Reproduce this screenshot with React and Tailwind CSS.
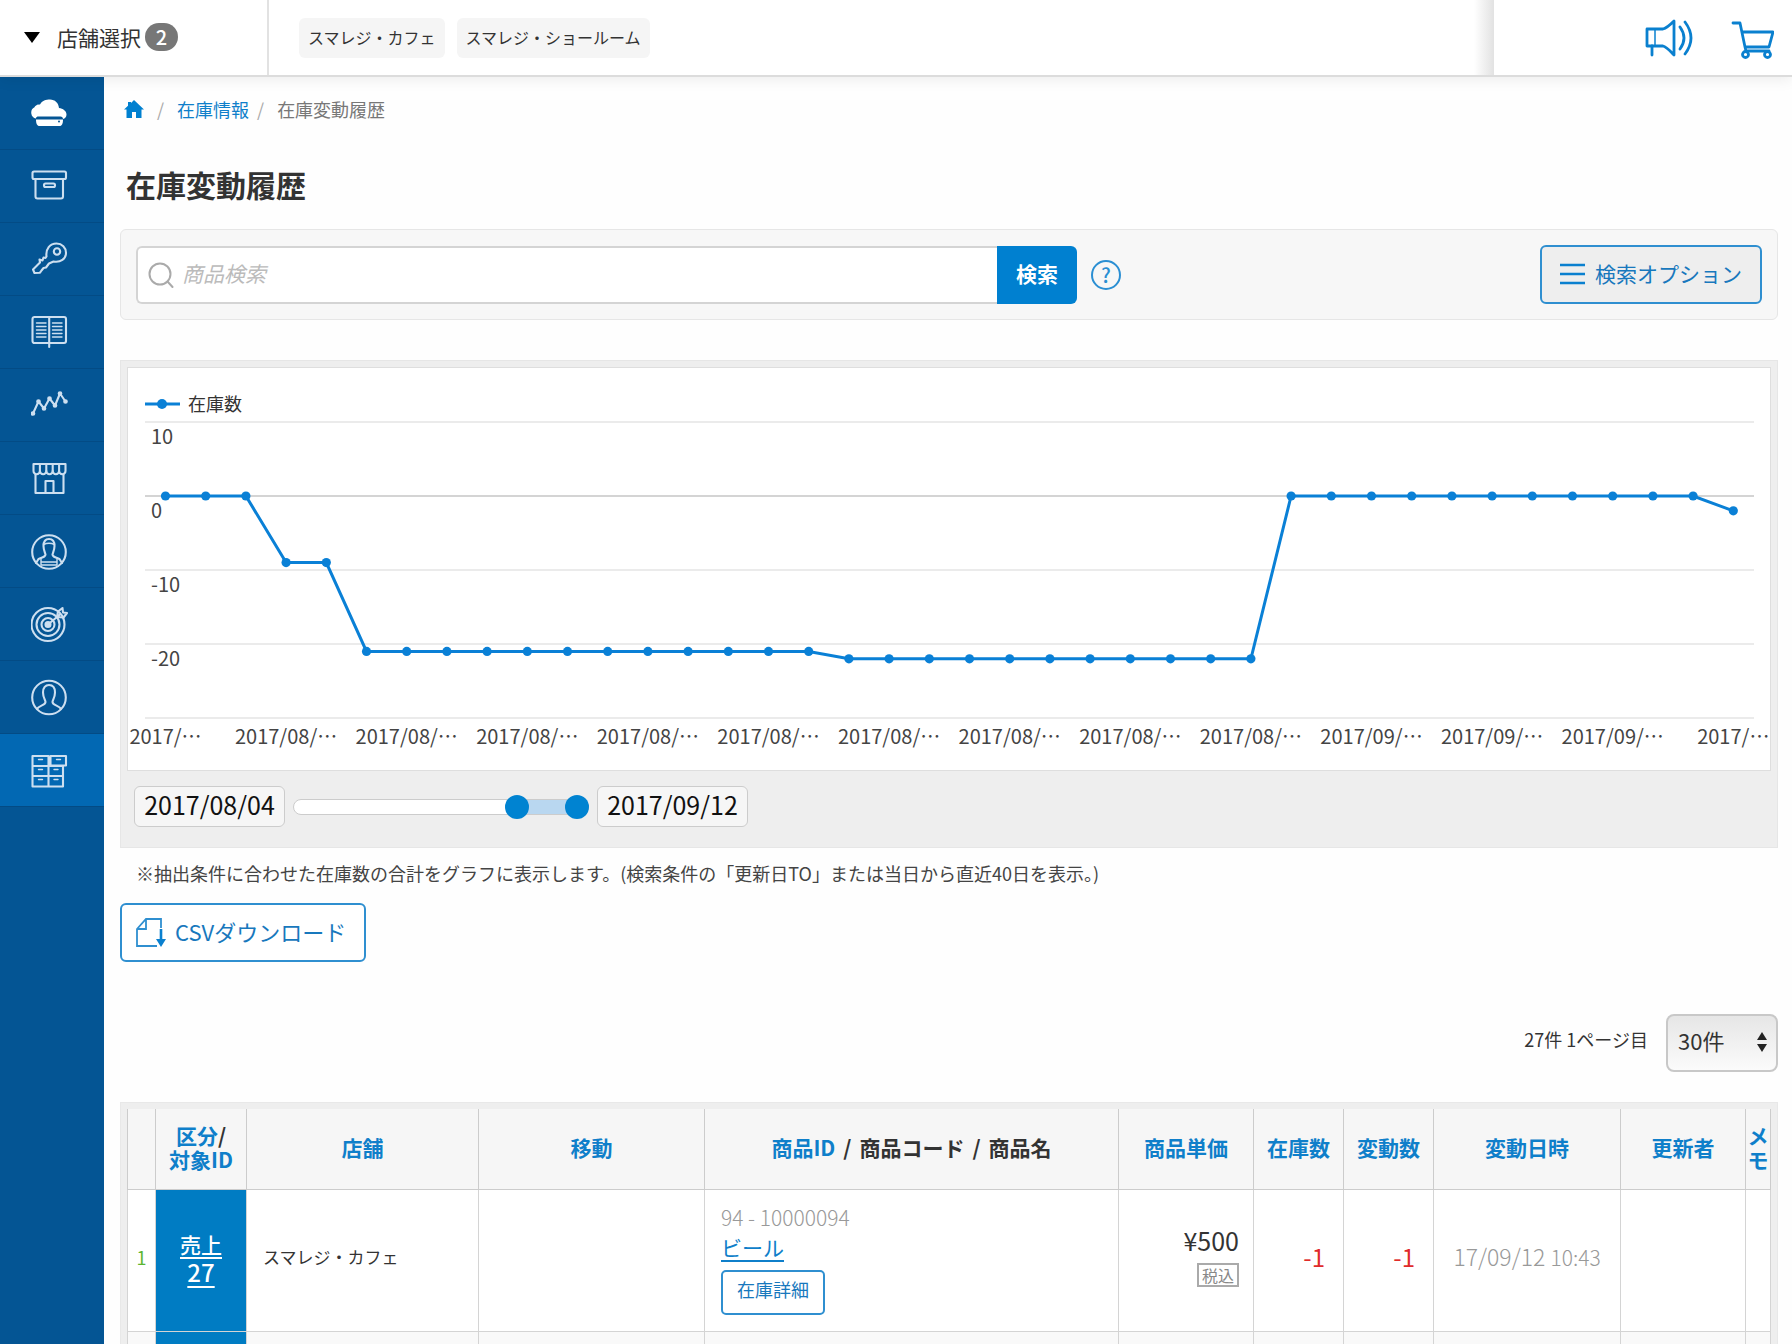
import { useState } from 'react';
import clsx from 'clsx';

const icons = {
  cloud: (
    <>
      <path
        d="M5 23.5a6 6 0 0 1-1.5-11.2C5 9.5 7.5 9.5 9 9.5 11 5.5 15 4.5 19 4.5c5 0 8.5 3.5 9 8.5 4 .5 7.5 3 7.5 6.5 0 2.5-1.5 4-3.5 4.5 0-1.5-1-2.5-2.5-2.5h-22C6 21.5 5 22 5 23.5z"
        fill="#fff"
        stroke="none"
      />
      <path d="M5 24.5h27c0 4-1 6.5-3.5 6.5h-20C6 31 5 28.5 5 24.5z" fill="#fff" stroke="none" />
      <circle cx="28" cy="26.5" r="1" fill="#045594" stroke="none" />
    </>
  ),
  archive: (
    <>
      <rect x="1.5" y="3.5" width="33.5" height="7.5" rx="1.5" />
      <path d="M4.5 11v17.5a2 2 0 0 0 2 2H30a2 2 0 0 0 2-2V11" />
      <rect x="13" y="15.5" width="11" height="3.5" rx="1.5" />
    </>
  ),
  key: (
    <>
      <path d="M15.5 15.5C14.5 8 19 2.5 25.5 2.5c5.5 0 9.5 4 9.5 9.3 0 6.2-5.5 10-12.5 8.7l-4.5 2-3 4-2.5.5-2 2.5L9 31.7l-5.5.3L2 28.5l7-7-.5-3 3 1 1-3 2 .5z" />
      <circle cx="26" cy="10.5" r="3.2" />
    </>
  ),
  book: (
    <>
      <rect x="1.5" y="3" width="33.5" height="26" rx="2" />
      <path d="M18.2 3v30" />
      <path d="M5.5 9H15M5.5 12.5H15M5.5 16H15M5.5 19.5H15M5.5 23H15M21.5 9H31M21.5 12.5H31M21.5 16H31M21.5 19.5H31M21.5 23H31" strokeWidth="1.4" />
    </>
  ),
  trend: (
    <>
      <path d="M2 26.5 7.5 14.5 13 21.5 18.5 11.5 24 18.5 29 6.5 34.5 14.5" />
      {[[2, 26.5], [7.5, 14.5], [13, 21.5], [18.5, 11.5], [24, 18.5], [29, 6.5], [34.5, 14.5]].map(([x, y]) => (
        <circle key={x} cx={x} cy={y} r="1.3" fill="currentColor" />
      ))}
    </>
  ),
  shop: (
    <>
      <path d="M2.5 4h32v7a3.2 3.2 0 0 1-6.4 0 3.2 3.2 0 0 1-6.4 0 3.2 3.2 0 0 1-6.4 0 3.2 3.2 0 0 1-6.4 0 3.2 3.2 0 0 1-6.4 0z" />
      <path d="M8.9 4v7M15.3 4v7M21.7 4v7M28.1 4v7" />
      <path d="M4.5 14.5V33h28V14.5M14.5 33V21h8v12" />
    </>
  ),
  staff: (
    <>
      <circle cx="18" cy="19" r="16.8" />
      <path d="M12.5 13c0-4.5 2-7 5.5-7s5.5 2.5 5.5 7c0 4-1.5 6.5-2 8.5 0 2 2 2.5 7 4.5l2.5 4M12.5 13c0 4 1.5 6.5 2 8.5 0 2-2 2.5-7 4.5L5 30" />
      <path d="M12.5 11.5c3.5-1.5 7.5-1.5 11 0M10 26v6h16v-6M10 29h16" strokeWidth="1.4" />
    </>
  ),
  target: (
    <>
      <circle cx="17" cy="18.5" r="16.5" />
      <circle cx="17" cy="18.5" r="11.5" />
      <circle cx="17" cy="18.5" r="6.5" />
      <circle cx="17" cy="18.5" r="2.5" fill="currentColor" />
      <path d="M17 18.5 29 8.5M26 11l1-5.5L31.5 2l.5 4.5 4 .5-3.5 4.5z" />
    </>
  ),
  person: (
    <>
      <circle cx="18" cy="18.5" r="16.8" />
      <path d="M6 30c1.5-3.5 8.5-3.5 8.5-7 0-2-2.5-4.5-2.5-9.5C12 8.500 14.5 6 18 6s6 2.500 6 7.500c0 5-2.5 7.5-2.5 9.5 0 3.5 7 3.5 8.5 7" />
    </>
  ),
  drawers: (
    <>
      <path d="M1.5 4h16v10h-16zM1.5 14h16v10h-16zM1.5 24h16v10.5h-16zM17.5 14H32v10H17.5zM17.5 24H32v10.5H17.5zM19.5 4H35v9.5H19.5z" />
      <path d="M7.5 7.5h4M7.5 17.5h4M7.5 27.5h4M23 17.5h4M23 27.5h4M25.5 7.5h4" strokeWidth="1.4" />
    </>
  ),
};

const menu = [
  { icon: 'cloud', label: 'ホーム' },
  { icon: 'archive', label: '商品' },
  { icon: 'key', label: '設定' },
  { icon: 'book', label: '取引' },
  { icon: 'trend', label: '分析' },
  { icon: 'shop', label: '店舗' },
  { icon: 'staff', label: 'スタッフ' },
  { icon: 'target', label: '販促' },
  { icon: 'person', label: '会員' },
  { icon: 'drawers', label: '在庫', active: true },
];

const stores = ['スマレジ・カフェ', 'スマレジ・ショールーム'];

// stock per day, 2017/08/04 - 2017/09/12
const stock = [0, 0, 0, -9, -9, ...Array(12).fill(-21), ...Array(11).fill(-22), ...Array(11).fill(0), -2];

const columns = [
  { width: 'w-[28px]' },
  { width: 'w-[91px]' },
  { width: 'w-[232px]' },
  { width: 'w-[226px]' },
  { width: '' },
  { width: 'w-[135px]' },
  { width: 'w-[90px]' },
  { width: 'w-[90px]' },
  { width: 'w-[187px]' },
  { width: 'w-[125px]' },
  { width: 'w-[25px]' },
];

function Header() {
  return (
    <header className="relative z-10 flex h-[77px] shrink-0 border-b-2 border-[#dcdcdc] bg-white shadow-[0_2px_14px_rgba(0,0,0,0.08)]">
      <button type="button" className="flex w-[269px] items-center border-r-2 border-[#e2e2e2] pb-px pl-6 text-[21px] text-[#333]">
        <svg viewBox="0 0 16 11" className="mr-[17px] h-[11px] w-4" aria-hidden="true">
          <path d="M0 0h16L8 11z" fill="#000" />
        </svg>
        店舗選択
        <span className="ml-1 flex h-7 w-[33px] items-center justify-center rounded-full bg-[#777] text-[20px] font-medium text-white">2</span>
      </button>
      <ul className="flex flex-1 items-center gap-3 pl-[30px]">
        {stores.map((name) => (
          <li key={name} className="rounded-md bg-[#f5f5f5] px-[9px] pt-[7px] pb-[9px] text-base leading-6 text-[#333]">
            {name}
          </li>
        ))}
      </ul>
      <div className="w-5 bg-linear-to-r from-white to-[#e2e2e2]" />
      <nav className="flex w-[298px] items-center justify-end gap-9 pr-[18px] text-[#0a80cf]">
        <a href="#news" aria-label="お知らせ">
          <svg viewBox="0 0 54 44" className="h-11 w-[54px]" fill="none" stroke="currentColor" strokeWidth="2.8" strokeLinejoin="round" strokeLinecap="round">
            <path d="M7 13h16c4-1 7-4 11-8v34c-4-4-7-8-11-9H7z" />
            <path d="M15 13v17" strokeWidth="1.5" />
            <path d="M12 30v9M40 11q8 11 0 22M45 6q12 16 0 32" />
          </svg>
        </a>
        <a href="#cart" aria-label="カート">
          <svg viewBox="0 0 44 44" className="h-11 w-11" fill="none" stroke="currentColor" strokeWidth="2.8" strokeLinejoin="round" strokeLinecap="round">
            <path d="M3 7h7l5 24M12 16h31l-4 15H15l1 4h23" />
            <circle cx="15.5" cy="38.5" r="3" />
            <circle cx="37.5" cy="38.5" r="3" />
          </svg>
        </a>
      </nav>
    </header>
  );
}

function Sidebar() {
  return (
    <nav className="w-[104px] shrink-0 bg-[#045594]">
      <ul>
        {menu.map((item) => (
          <li key={item.icon}>
            <a
              href={`#${item.icon}`}
              aria-label={item.label}
              className={clsx(
                'flex h-[73px] items-center justify-center border-b border-[#034b85] pr-[6px] text-[#cddff0]',
                item.active && 'bg-[#0268b3]'
              )}
            >
              <svg viewBox="0 0 37 37" className="size-[37px]" fill="none" stroke="currentColor" strokeWidth="2.1" strokeLinejoin="round" strokeLinecap="round">
                {icons[item.icon]}
              </svg>
            </a>
          </li>
        ))}
      </ul>
    </nav>
  );
}

function SearchBar() {
  return (
    <div className="mt-[25px] flex items-center justify-between rounded-md border border-[#e6e6e6] bg-[#f7f7f7] px-[15px] py-[15px]">
      <form className="flex max-w-[985px] flex-1 items-center" onSubmit={(e) => e.preventDefault()}>
        <label className="flex h-[58px] min-w-0 flex-1 items-center rounded-l-md border-2 border-r-0 border-[#d4d4d4] bg-white pl-[10px]">
          <svg viewBox="0 0 26 26" className="size-[26px]" fill="none" stroke="#aaa" strokeWidth="2" strokeLinecap="round" aria-hidden="true">
            <circle cx="12" cy="12" r="10.5" />
            <path d="m19.5 19.5 5 5.5" />
          </svg>
          <input
            type="text"
            aria-label="商品検索"
            placeholder="商品検索"
            className="ml-2 min-w-0 flex-1 pb-0.5 text-[21px] outline-none placeholder:italic placeholder:text-[#bbb]"
          />
        </label>
        <button type="submit" className="h-[58px] w-20 rounded-r-md bg-[#0080d0] pb-0.5 text-[21px] font-bold text-white">
          検索
        </button>
        <a href="#help" aria-label="ヘルプ" className="ml-[14px] flex size-[30px] items-center justify-center rounded-full border-2 border-[#2b8fd3] text-[20px] font-medium text-[#2b8fd3]">
          ?
        </a>
      </form>
      <button type="button" className="flex h-[59px] items-center gap-[10px] rounded-md border-2 border-[#2f8fd0] bg-[#eee] px-[18px] pb-0.5 text-[21px] text-[#1878bd]">
        <svg viewBox="0 0 25 22" className="h-[22px] w-[25px]" stroke="#0a80cf" strokeWidth="2.6" aria-hidden="true">
          <path d="M0 2h25M0 11h25M0 20h25" />
        </svg>
        検索オプション
      </button>
    </div>
  );
}

function StockChart() {
  const px = (i) => 37.5 + i * 40.2;
  const py = (v) => 128 - v * 7.4;
  const label = (i) => {
    if (i === 0 || i === stock.length - 1) return '2017/…';
    return i < 28 ? '2017/08/…' : '2017/09/…';
  };

  return (
    <svg viewBox="0 0 1642 402" className="block w-full" role="img" aria-label="在庫数">
      {[10, 0, -10, -20, -30].map((v) => (
        <g key={v}>
          <line x1="17" x2="1626" y1={py(v)} y2={py(v)} stroke={v === 0 ? '#d4d4d4' : '#ebebeb'} strokeWidth="2" />
          {v > -30 && (
            <text x="23" y={py(v) + 22} fontSize="20" fill="#444">
              {v}
            </text>
          )}
        </g>
      ))}
      <polyline points={stock.map((v, i) => `${px(i)},${py(v)}`).join(' ')} fill="none" stroke="#0a80d6" strokeWidth="3" />
      {stock.map((v, i) => (
        <circle key={i} cx={px(i)} cy={py(v)} r="4.6" fill="#0a80d6" />
      ))}
      {stock.map((v, i) =>
        i % 3 === 0 ? (
          <text key={i} x={px(i)} y="376" fontSize="20" fill="#444" textAnchor="middle">
            {label(i)}
          </text>
        ) : null
      )}
      <line x1="17" x2="52" y1="36" y2="36" stroke="#0a80d6" strokeWidth="3" />
      <circle cx="34" cy="36" r="5" fill="#0a80d6" />
      <text x="60" y="43" fontSize="18" fill="#333">
        在庫数
      </text>
    </svg>
  );
}

const thumb =
  'pointer-events-none absolute inset-0 m-0 h-6 w-full appearance-none bg-transparent [&::-webkit-slider-thumb]:pointer-events-auto [&::-webkit-slider-thumb]:size-6 [&::-webkit-slider-thumb]:appearance-none [&::-webkit-slider-thumb]:rounded-full [&::-webkit-slider-thumb]:bg-[#0083d1]';

function DateRange() {
  const [from, setFrom] = useState(78);
  const [to, setTo] = useState(100);
  const dateBox = 'h-[41px] w-[151px] rounded-md border border-[#ccc] bg-[#f6f6f6] pb-1.5 text-center text-[25px] text-[#111]';

  return (
    <div className="mt-[15px] mb-5 flex items-center gap-2 pl-[7px]">
      <input type="text" readOnly aria-label="開始日" value="2017/08/04" className={dateBox} />
      <div className="relative h-6 w-[296px]">
        <div className="mt-1 h-4 w-full overflow-hidden rounded-full border border-[#ccc] bg-white">
          <div className="h-full bg-[#b9d7f0]" style={{ marginLeft: `${from}%`, width: `${to - from}%` }} />
        </div>
        <input type="range" aria-label="開始" value={from} onChange={(e) => setFrom(Math.min(+e.target.value, to))} className={thumb} />
        <input type="range" aria-label="終了" value={to} onChange={(e) => setTo(Math.max(+e.target.value, from))} className={thumb} />
      </div>
      <input type="text" readOnly aria-label="終了日" value="2017/09/12" className={dateBox} />
    </div>
  );
}

function HistoryTable() {
  const th = 'border-x border-b border-[#ccc] bg-[#f6f6f6] pb-1 text-[21px] leading-6 font-bold';
  const td = 'border border-[#d4d4d4]';
  const link = 'text-[#0f7fca]';

  return (
    <div className="mt-[30px] border border-[#e8e8e8] bg-[#eee] p-[6px]">
      <table className="w-full table-fixed border-collapse bg-white">
        <colgroup>
          {columns.map((c, i) => (
            <col key={i} className={c.width} />
          ))}
        </colgroup>
        <thead>
          <tr className="h-20">
            <th className={th}></th>
            <th className={th}>
              <div className="flex justify-center">
                <a href="#type" className={link}>区分</a>
                <span>/</span>
              </div>
              <a href="#target" className={clsx(link, 'block')}>対象ID</a>
            </th>
            <th className={th}><a href="#store" className={link}>店舗</a></th>
            <th className={th}><a href="#move" className={link}>移動</a></th>
            <th className={clsx(th, 'text-[#333]')}>
              <a href="#id" className={link}>商品ID</a>
              <span className="mx-2">/</span>商品コード<span className="mx-2">/</span>商品名
            </th>
            <th className={th}><a href="#price" className={link}>商品単価</a></th>
            <th className={th}><a href="#stock" className={link}>在庫数</a></th>
            <th className={th}><a href="#diff" className={link}>変動数</a></th>
            <th className={th}><a href="#date" className={link}>変動日時</a></th>
            <th className={th}><a href="#user" className={link}>更新者</a></th>
            <th className={th}><a href="#memo" className={link}>メモ</a></th>
          </tr>
        </thead>
        <tbody>
          <tr className="h-[142px]">
            <td className={clsx(td, 'pb-1.5 text-center text-lg text-[#5cb531]')}>1</td>
            <td className={clsx(td, 'bg-[#007cc3] pb-1 text-center leading-7 font-medium text-white')}>
              <a href="#27" className="block underline underline-offset-4">
                <span className="block text-[21px]">売上</span>
                <span className="block text-[24px]">27</span>
              </a>
            </td>
            <td className={clsx(td, 'pb-1.5 pl-4 text-[17px] text-[#333]')}>スマレジ・カフェ</td>
            <td className={td}></td>
            <td className={clsx(td, 'pb-1 pl-4')}>
              <div className="text-[21px] leading-[30px] font-light text-[#999]">94 - 10000094</div>
              <a href="#beer" className="block text-[21px] leading-[30px] text-[#0f7fca] underline underline-offset-4">ビール</a>
              <button type="button" className="mt-2 h-[45px] rounded-[5px] border-2 border-[#2f8fd0] bg-white px-[14px] pb-1.5 text-lg text-[#1878bd]">
                在庫詳細
              </button>
            </td>
            <td className={clsx(td, 'pr-[14px] pb-[10px] text-right text-[#333]')}>
              <div className="mb-0.5 text-[25px] leading-9">¥500</div>
              <span className="inline-block border-2 border-[#aaa] px-[3px] text-base leading-5 text-[#888]">税込</span>
            </td>
            <td className={clsx(td, 'pr-[18px] pb-1.5 text-right text-[24px] text-[#e02b2b]')}>-1</td>
            <td className={clsx(td, 'pr-[18px] pb-1.5 text-right text-[24px] text-[#e02b2b]')}>-1</td>
            <td className={clsx(td, 'pb-1.5 text-center text-[23px] font-light whitespace-nowrap text-[#999]')}>
              17/09/12 <span className="text-[21px]">10:43</span>
            </td>
            <td className={td}></td>
            <td className={td}></td>
          </tr>
          <tr className="h-[142px] bg-[#f9f9f9]">
            {columns.map((c, i) => (
              <td key={i} className={clsx(td, i === 1 && 'bg-[#007cc3]')}></td>
            ))}
          </tr>
        </tbody>
      </table>
    </div>
  );
}

export default function App() {
  return (
    <div lang="ja" className="flex h-screen flex-col overflow-hidden bg-[#fefefe] font-['Noto_Sans_CJK_JP',sans-serif] text-lg text-[#333]">
      <Header />
      <div className="flex min-h-0 flex-1">
        <Sidebar />
        <main className="min-w-0 flex-1 overflow-hidden pt-[19px] pr-[14px] pl-4">
          <nav className="flex items-center pl-1 text-lg leading-[26px]">
            <a href="#home" aria-label="ホーム">
              <svg viewBox="0 0 20 18" className="h-[18px] w-5" fill="#0080d0">
                <path d="M10 0 20 9.5h-2.5V18H12v-6H8v6H2.5V9.5H0L4 5.7V2h3v1z" />
              </svg>
            </a>
            <span className="mx-[13px] text-[#aaa]">/</span>
            <a href="#stock" className="text-[#0f7fca]">在庫情報</a>
            <span className="ml-2 mr-[13px] text-[#aaa]">/</span>
            <span className="text-[#777]">在庫変動履歴</span>
          </nav>
          <h1 className="mt-[42px] pl-1.5 text-[30px] leading-10 font-bold text-[#333]">在庫変動履歴</h1>
          <SearchBar />
          <section className="mt-10 border border-[#e6e6e6] bg-[#eee] px-[6px] pt-[6px]">
            <div className="border border-[#dedede] bg-white">
              <StockChart />
            </div>
            <DateRange />
          </section>
          <p className="mt-3 pl-4 text-lg leading-[26px] text-[#444]">
            ※抽出条件に合わせた在庫数の合計をグラフに表示します。(検索条件の「更新日TO」または当日から直近40日を表示。)
          </p>
          <button type="button" className="mt-[17px] flex h-[59px] items-center gap-2 rounded-md border-2 border-[#2f8fd0] bg-white pr-[18px] pl-[14px] text-[22px] text-[#1878bd]">
            <svg viewBox="0 0 31 30" className="h-[30px] w-[31px]" fill="none" stroke="#2f8fd0" strokeWidth="1.8" aria-hidden="true">
              <path d="M21 28H1V11L10 1h15v9M10 1v10H1" />
              <path d="M25 11v14" stroke="#0a80cf" strokeWidth="2.6" />
              <path d="M20 21h10l-5 8z" fill="#0a80cf" stroke="none" />
            </svg>
            <span className="pb-0.5">CSVダウンロード</span>
          </button>
          <div className="mt-[52px] flex items-center justify-end gap-[18px]">
            <label htmlFor="per-page" className="pb-2 text-lg">27件 1ページ目</label>
            <div className="relative">
              <select
                id="per-page"
                className="h-[58px] w-28 appearance-none rounded-lg border-2 border-[#c8c8c8] bg-linear-to-b from-[#e6e6e6] to-[#fbfbfb] pb-1.5 pl-[10px] text-[22px] text-[#333]"
              >
                <option>30件</option>
                <option>50件</option>
                <option>100件</option>
              </select>
              <svg viewBox="0 0 10 20" className="pointer-events-none absolute top-[18px] right-[11px] h-5 w-[10px]" fill="#222" aria-hidden="true">
                <path d="M5 0l5 8H0zM5 20l-5-8h10z" />
              </svg>
            </div>
          </div>
          <HistoryTable />
        </main>
      </div>
    </div>
  );
}
